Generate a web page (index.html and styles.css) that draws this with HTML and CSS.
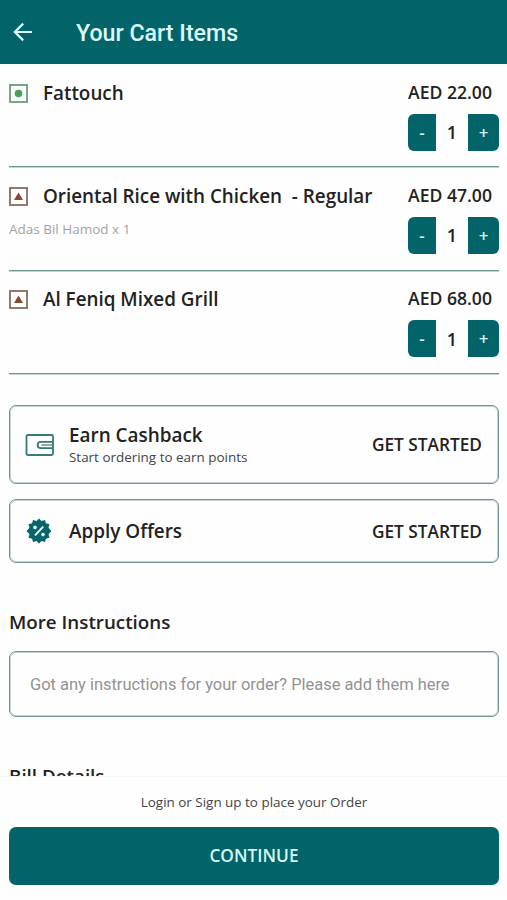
FILE: index.html
```html
<!DOCTYPE html>
<html lang="en">
<head>
    <meta charset="UTF-8">
    <meta name="viewport" content="width=device-width, initial-scale=1.0">
    <title>Your Cart Items</title>
    <link rel="stylesheet" href="styles.css">
</head>
<body>
    <header class="header">
        <svg class="back" viewBox="0 0 20 20"><path d="M19 10H2M10.2 1.6L1.8 10l8.4 8.4"/></svg>
        <h1>Your Cart Items</h1>
    </header>

    <main class="content">
        <!-- Cart items -->
        <div class="item">
            <div class="info">
                <div class="name-row">
                    <svg class="mark veg" viewBox="0 0 19 19"><rect x="1" y="1" width="17" height="17"/><circle cx="9.5" cy="9.5" r="3.8"/></svg>
                    <span class="name">Fattouch</span>
                </div>
            </div>
            <div class="side">
                <div class="price">AED 22.00</div>
                <div class="qty"><button class="minus">-</button><span>1</span><button class="plus">+</button></div>
            </div>
        </div>
        <div class="item">
            <div class="info">
                <div class="name-row">
                    <svg class="mark nonveg" viewBox="0 0 19 19"><rect x="1" y="1" width="17" height="17"/><path d="M9.5 5.5l4.5 7.5H5z"/></svg>
                    <span class="name">Oriental Rice with Chicken&nbsp; - Regular</span>
                </div>
                <div class="addon">Adas Bil Hamod x 1</div>
            </div>
            <div class="side">
                <div class="price">AED 47.00</div>
                <div class="qty"><button class="minus">-</button><span>1</span><button class="plus">+</button></div>
            </div>
        </div>
        <div class="item">
            <div class="info">
                <div class="name-row">
                    <svg class="mark nonveg" viewBox="0 0 19 19"><rect x="1" y="1" width="17" height="17"/><path d="M9.5 5.5l4.5 7.5H5z"/></svg>
                    <span class="name">Al Feniq Mixed Grill</span>
                </div>
            </div>
            <div class="side">
                <div class="price">AED 68.00</div>
                <div class="qty"><button class="minus">-</button><span>1</span><button class="plus">+</button></div>
            </div>
        </div>

        <!-- Rewards -->
        <div class="card cashback">
            <svg class="wallet" viewBox="0 0 30 22"><rect x="1.5" y="1" width="26.5" height="20" rx="1.5"/><path d="M28 7.8H15.8a3.2 3.2 0 0 0 0 6.4H28"/><path class="thin" d="M28 11H16.5"/></svg>
            <div class="card-text">
                <div class="card-title">Earn Cashback</div>
                <div class="card-sub">Start ordering to earn points</div>
            </div>
            <div class="start">GET STARTED</div>
        </div>
        <div class="card offers">
            <svg class="badge" viewBox="0 0 26 26">
                <path class="disc" d="M13 .5l2.5 2.4 3.5-1 .9 3.4 3.6 1-1 3.4L25.500 13l-3 3.300 1 3.400-3.600 1-.9 3.400-3.500-1L13 25.500l-2.500-2.400-3.500 1-.9-3.400-3.600-1 1-3.400L.5 13l3-3.300-1-3.400 3.600-1L7 1.900l3.500 1z"/>
                <path class="slash" d="M9 17.4l8.2-8.8"/>
                <circle class="dot" cx="9" cy="9.4" r="1.8"/>
                <circle class="dot" cx="17" cy="16.6" r="1.8"/>
            </svg>
            <div class="card-text">
                <div class="card-title">Apply Offers</div>
            </div>
            <div class="start">GET STARTED</div>
        </div>

        <h2>More Instructions</h2>
        <input type="text" class="notes" placeholder="Got any instructions for your order? Please add them here">

        <h2 class="bill">Bill Details</h2>
    </main>

    <footer class="footer">
        <p>Login or Sign up to place your Order</p>
        <button class="continue">CONTINUE</button>
    </footer>
</body>
</html>
```
FILE: styles.css
```css
* {
    box-sizing: border-box;
}
body {
    margin: 0;
    height: 900px;
    display: flex;
    flex-direction: column;
    overflow: hidden;
    font-family: 'Open Sans', 'Noto Sans', sans-serif;
    background-color: #fefefe;
    color: #222;
}
h1, h2, p {
    margin: 0;
}
button {
    border: none;
    padding: 0;
    font-family: inherit;
    background-color: #026468;
    color: #d5f8f8;
    cursor: pointer;
}
.header {
    flex: none;
    height: 64px;
    display: flex;
    align-items: center;
    padding: 0 13px;
    background-color: #026468;
    color: #dcfafa;
}
.header h1 {
    margin-left: 43px;
    padding-top: 2px;
    font: 500 23.2px/28px Roboto, sans-serif;
}
.back {
    width: 20px;
    height: 20px;
    fill: none;
    stroke: #dcfafa;
    stroke-width: 2.2;
}
.content {
    flex: none;
    height: 712px;
    padding: 0 8px 0 9px;
    overflow: hidden;
}
.item {
    height: 103.4px;
    display: flex;
    justify-content: space-between;
    border-bottom: 1px solid #6f9692;
    box-shadow: 0 1px 0 #c3d5d2;
}
.name-row {
    margin-top: 16px;
    display: flex;
    align-items: center;
    height: 26px;
}
.mark {
    width: 19px;
    height: 19px;
    margin-right: 15px;
    fill: none;
    stroke-width: 1.8;
}
.veg {
    stroke: #6b9e7a;
}
.veg circle {
    fill: #43a05d;
    stroke: none;
}
.nonveg {
    stroke: #8b6b5c;
}
.nonveg path {
    fill: #864b36;
    stroke: none;
}
.name {
    padding-bottom: 1px;
    font-size: 18.85px;
    font-weight: 600;
    white-space: nowrap;
}
.addon {
    margin-top: 11px;
    font-size: 13.5px;
    line-height: 18px;
    color: #a3a3a3;
}
.side {
    width: 91px;
    padding-top: 15.6px;
}
.price {
    font-size: 17.6px;
    line-height: 25px;
    font-weight: 600;
    white-space: nowrap;
}
.qty {
    margin-top: 9px;
    display: flex;
    height: 37px;
    align-items: center;
    font-size: 18px;
    font-weight: 600;
}
.qty span {
    width: 32px;
    text-align: center;
}
.qty button {
    height: 37px;
    font-size: 17px;
    font-weight: 600;
}
.minus {
    width: 28px;
    border-radius: 6px 0 0 6px;
}
.plus {
    width: 31px;
    border-radius: 0 6px 6px 0;
}
.card {
    display: flex;
    align-items: center;
    padding: 0 16px 0 15px;
    border: 1px solid #6f9692;
    border-radius: 7px;
    box-shadow: inset 0 0 0 1px #c3d5d2;
}
.cashback {
    height: 79px;
    margin-top: 31px;
}
.offers {
    height: 64px;
    margin-top: 15px;
}
.wallet {
    width: 30px;
    height: 22px;
    margin-right: 14px;
    fill: none;
    stroke: #327b78;
    stroke-width: 1.8;
}
.wallet .thin {
    stroke-width: 1.2;
}
.badge {
    width: 26px;
    height: 26px;
    margin: 0 17px 0 1px;
}
.disc {
    fill: #066568;
}
.slash {
    stroke: #e4fbfa;
    stroke-width: 2;
}
.dot {
    fill: #e4fbfa;
}
.card-text {
    flex: 1;
}
.card-title {
    font-size: 18.9px;
    line-height: 25px;
    font-weight: 600;
}
.card-sub {
    font-size: 13.45px;
    line-height: 18px;
    color: #444;
}
.start {
    font-size: 17.25px;
    font-weight: 600;
    white-space: nowrap;
}
h2 {
    margin-top: 46px;
    font-size: 18.8px;
    line-height: 26px;
    font-weight: 600;
}
.notes {
    display: block;
    width: 100%;
    height: 66px;
    margin-top: 16px;
    padding: 0 20px;
    border: 1px solid #6f9692;
    border-radius: 7px;
    box-shadow: inset 0 0 0 1px #c3d5d2;
    background: none;
    font: 16.45px Roboto, sans-serif;
}
.notes::placeholder {
    color: #929292;
}
.footer {
    flex: 1;
    padding: 15px 8px 0 9px;
    border-top: 1px solid #f7f7f7;
    text-align: center;
}
.footer p {
    font-size: 13.45px;
    line-height: 20px;
    color: #444;
}
.continue {
    width: 100%;
    height: 58px;
    margin-top: 15px;
    padding-bottom: 2px;
    border-radius: 7px;
    font-size: 17.3px;
    font-weight: 600;
}
```
